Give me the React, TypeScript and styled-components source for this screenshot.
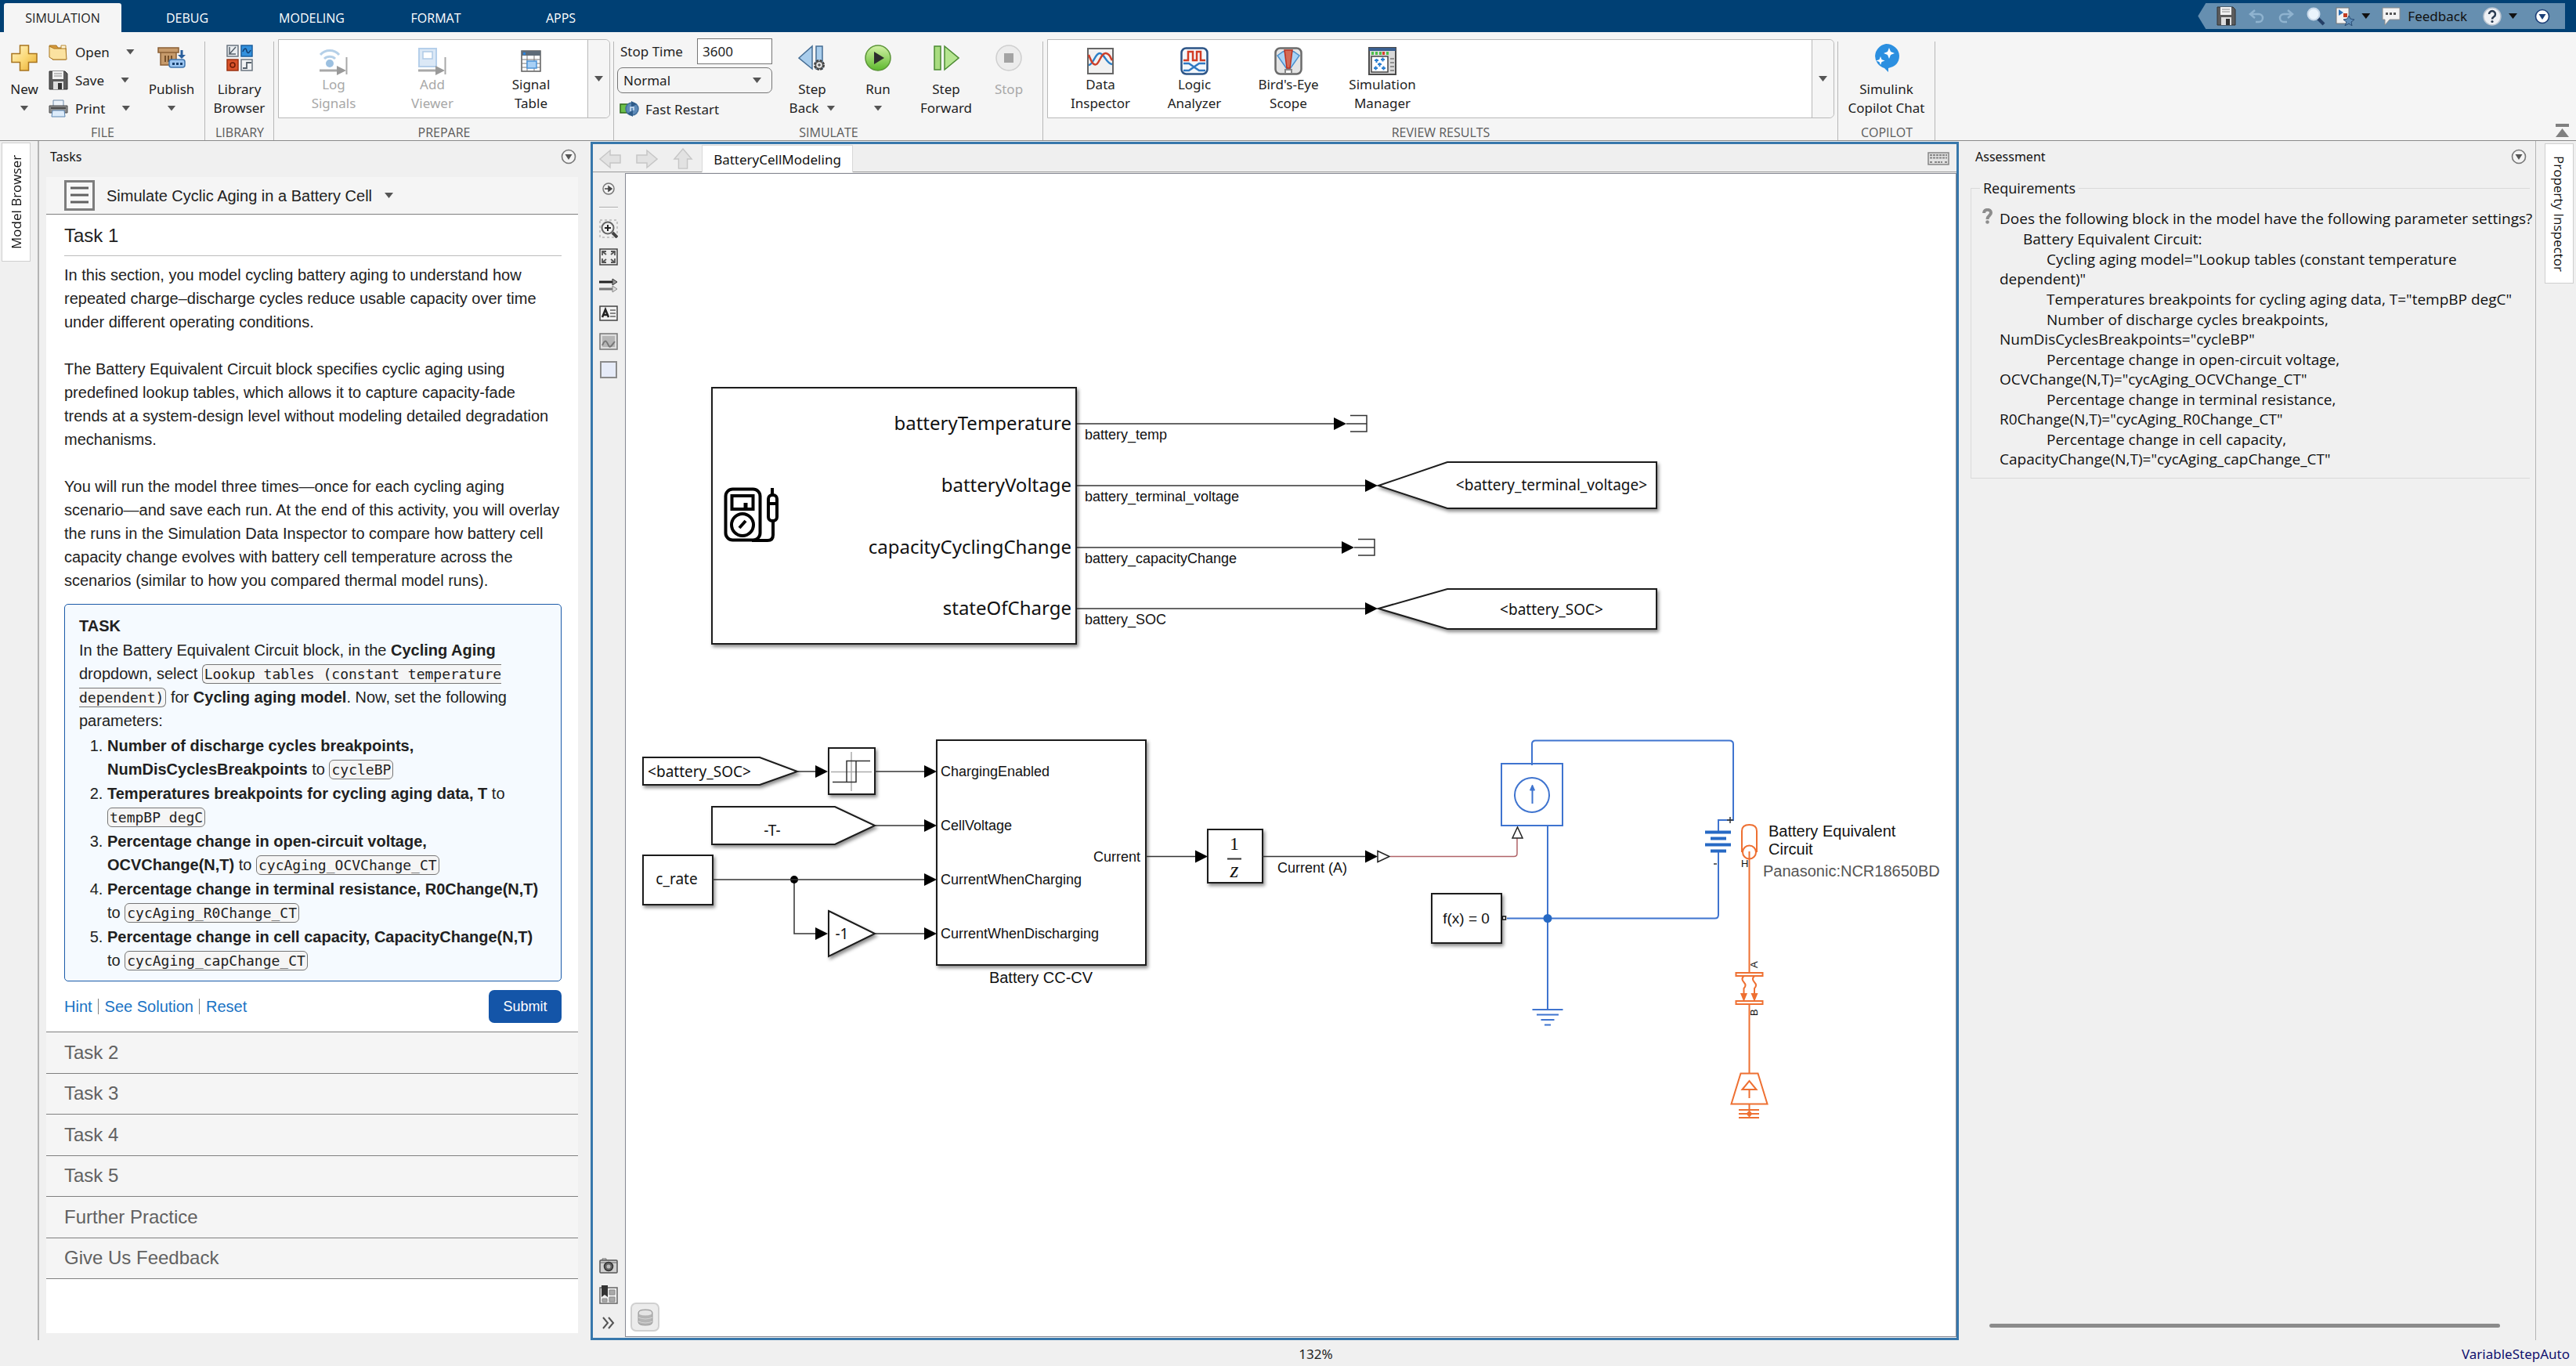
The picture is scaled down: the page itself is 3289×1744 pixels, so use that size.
import React from "react";
import styled, { createGlobalStyle, css } from "styled-components";

const UI = `"Noto Sans", "Open Sans", sans-serif`;
const CAPS = `"Open Sans", "Noto Sans", sans-serif`;
const DOC = `"Liberation Sans", Arial, sans-serif`;
const MONO = `"DejaVu Sans Mono", monospace`;

const GlobalStyle = createGlobalStyle`
  * { box-sizing: border-box; }
  body { margin: 0; background: #f0f0f0; font-family: ${UI}; font-size: 17px; color: #1e1e1e; }
  button, input, select { font: inherit; color: inherit; }
  button { border: 0; padding: 0; background: none; cursor: pointer; }
  svg { display: block; flex: none; }
`;

/* ---------- shell ---------- */

const Shell = styled.div`
  display: flex;
  flex-direction: column;
  min-height: 100vh;
`;

const Workspace = styled.main`
  display: flex;
  flex: 1;
  border-top: 1px solid #8a8a8a;
`;

const Caret = styled.span<{ $color?: string }>`
  flex: none;
  width: 11px;
  height: 7px;
  background: ${(p) => p.$color || "#555"};
  clip-path: polygon(0 0, 100% 0, 50% 100%);
`;

/* ---------- title bar ---------- */

const TitleBar = styled.header`
  display: flex;
  justify-content: space-between;
  height: 41px;
  padding: 4px 14px 0 5px;
  background: #004074;
`;

const TabList = styled.nav`
  display: flex;
`;

const Tab = styled.button<{ $width: number; $active?: boolean }>`
  width: ${(p) => p.$width}px;
  font-family: ${CAPS};
  font-size: 16px;
  color: ${(p) => (p.$active ? "#222" : "#fff")};
  background: ${(p) => (p.$active ? "#f5f5f5" : "transparent")};
  border-radius: 3px 3px 0 0;
`;

const QuickAccess = styled.div`
  display: flex;
  align-items: center;
  height: 33px;
  padding: 0 19px 0 24px;
  background: #668fb0;
  clip-path: polygon(10px 0, 100% 0, 100% 100%, 10px 100%, 0 50%);
  color: #111;
`;

const QuickButton = styled.button<{ $gap?: number }>`
  display: flex;
  align-items: center;
  gap: 9px;
  margin-right: ${(p) => p.$gap ?? 16}px;
`;

/* ---------- ribbon ---------- */

const Ribbon = styled.section`
  display: flex;
  height: 138px;
  background: #f5f5f5;
`;

const RibbonFill = styled.div`
  flex: 1;
  display: flex;
  align-items: flex-end;
  justify-content: flex-end;
  padding: 0 9px 4px 0;
`;

const Section = styled.div<{ $width: number }>`
  display: flex;
  flex-direction: column;
  justify-content: space-between;
  width: ${(p) => p.$width}px;
  background: linear-gradient(#b8b8b8, #b8b8b8) right 12px / 1px 100% no-repeat;
`;

const SectionBody = styled.div`
  display: flex;
`;

const SectionLabel = styled.div`
  font-family: ${CAPS};
  font-size: 16px;
  line-height: 20px;
  text-align: center;
  color: #5a5a5a;
`;

const BigButton = styled.button<{ $width: number }>`
  display: flex;
  flex-direction: column;
  align-items: center;
  width: ${(p) => p.$width}px;
  padding-top: 15px;
  line-height: 24px;
  &:disabled { color: #a8a8a8; }
`;

const BigIcon = styled.span`
  display: flex;
  align-items: center;
  justify-content: center;
  height: 36px;
  margin-bottom: 10px;
`;

const Line = styled.span`
  display: flex;
  align-items: center;
  justify-content: center;
  gap: 10px;
  height: 24px;
  white-space: nowrap;
`;

const FileColumn = styled.div`
  display: flex;
  flex-direction: column;
  width: 126px;
  padding-top: 7px;
`;

const SmallButton = styled.button`
  display: flex;
  align-items: center;
  gap: 9px;
  height: 36px;
`;

const SmallText = styled.span`
  margin-right: 12px;
`;

const Gallery = styled.div`
  display: flex;
  flex: 1;
  height: 101px;
  margin: 9px 5px 0;
  border: 1px solid #b9b9b9;
  border-radius: 0 6px 6px 0;
  background: #fff;
`;

const GalleryItems = styled.div`
  display: flex;
  flex: 1;
  padding-left: 7px;
  ${BigButton} { padding-top: 9px; }
  ${BigIcon} { margin-bottom: 0; }
`;

const GalleryMore = styled.button`
  display: flex;
  align-items: center;
  justify-content: center;
  width: 28px;
  border-left: 1px solid #b9b9b9;
  border-radius: 0 6px 6px 0;
  background: #f5f5f5;
`;

const RunSettings = styled.div`
  display: flex;
  flex-direction: column;
  gap: 4px;
  width: 198px;
  margin: 8px 9px 0 4px;
`;

const StopTimeRow = styled.div`
  display: flex;
  align-items: center;
  justify-content: space-between;
  padding-left: 4px;
`;

const TimeInput = styled.input`
  width: 96px;
  height: 33px;
  padding: 0 6px;
  border: 1px solid #767676;
  background: #fff;
`;

const ModeBox = styled.div`
  display: flex;
  align-items: center;
  position: relative;
  ${Caret} { position: absolute; right: 14px; pointer-events: none; }
`;

const ModeSelect = styled.select`
  appearance: none;
  width: 100%;
  height: 33px;
  padding: 0 7px;
  border: 1px solid #767676;
  border-radius: 7px;
  background: #f5f5f5;
`;

const FastRestart = styled.button`
  display: flex;
  align-items: center;
  gap: 7px;
  height: 32px;
  padding-left: 3px;
`;

/* ---------- side rails & panels ---------- */

const Rail = styled.aside<{ $side: "left" | "right" }>`
  width: 50px;
  padding: 2px;
  border: 0 solid #b4b4b4;
  ${(p) =>
    p.$side === "left"
      ? css`border-right-width: 2px;`
      : css`border-left-width: 1px; width: 52px; padding: 3px 3px 3px 11px;`}
`;

const RailTab = styled.button<{ $flip?: boolean; $height: number }>`
  width: 37px;
  height: ${(p) => p.$height}px;
  border: 1px solid #cfcfcf;
  background: #fff;
  writing-mode: vertical-rl;
  color: #111;
  font-family: ${CAPS};
  ${(p) => p.$flip && css`transform: rotate(180deg);`}
`;

const PanelHead = styled.div`
  display: flex;
  align-items: center;
  justify-content: space-between;
  height: 40px;
  margin-bottom: 6px;
  font-size: 16px;
  color: #111;
`;

const TasksPanel = styled.section`
  display: flex;
  flex-direction: column;
  width: 704px;
  padding: 0 16px 9px 9px;
  ${PanelHead} { padding: 0 2px 0 5px; }
`;

const TasksBody = styled.div`
  flex: 1;
  background: #fff;
  font-family: ${DOC};
  font-size: 20px;
  line-height: 30px;
  color: #212121;
`;

const CourseBar = styled.div`
  display: flex;
  align-items: center;
  gap: 15px;
  height: 48px;
  padding-left: 23px;
  background: #f5f5f5;
  border-bottom: 1px solid #808080;
  font-size: 20px;
`;

const CourseButton = styled.button`
  display: flex;
  align-items: center;
  gap: 16px;
`;

const Article = styled.article`
  padding: 0 21px 11px 23px;
`;

const TaskTitle = styled.h2`
  margin: 0 0 9px;
  height: 53px;
  border-bottom: 1px solid #bdbdbd;
  font-size: 24px;
  line-height: 54px;
  font-weight: 400;
`;

const Para = styled.p`
  margin: 0 0 30px;
  &:last-of-type { margin-bottom: 15px; }
`;

const TaskBox = styled.section`
  padding: 12px 18px 10px 18px;
  border: 1px solid #1a5aa8;
  border-radius: 5px;
  background: #f5faff;
`;

const BoxTitle = styled.h3`
  margin: 0;
  font-size: 20px;
  line-height: 31px;
`;

const BoxText = styled.div`
  line-height: 30px;
`;

const Steps = styled.ol`
  margin: 2px 0 0;
  padding-left: 36px;
`;

const Step = styled.li`
  padding-bottom: 1px;
`;

const Code = styled.code`
  padding: 1px 2px;
  border: 1px solid #767676;
  border-radius: 6px;
  background: #f5f5f5;
  font-family: ${MONO};
  font-size: 18px;
  line-height: 20px;
`;

const Actions = styled.div`
  display: flex;
  align-items: center;
  height: 42px;
  margin-top: 11px;
`;

const ActionLink = styled.a`
  line-height: 20px;
  color: #1a73c4;
  text-decoration: none;
  & + & { margin-left: 7px; padding-left: 8px; border-left: 1px solid #808080; }
`;

const Submit = styled.button`
  width: 93px;
  height: 42px;
  margin-left: auto;
  border-radius: 7px;
  background: #1455a8;
  color: #fff;
  font-size: 18px;
`;

const TaskList = styled.div`
  display: flex;
  flex-direction: column;
  height: 316px;
  border-top: 1px solid #808080;
`;

const TaskRow = styled.button`
  flex: 1;
  padding-left: 23px;
  border-bottom: 1px solid #808080;
  background: #f5f5f5;
  font-size: 24px;
  text-align: left;
  color: #616161;
`;

/* ---------- model window ---------- */

const Frame = styled.section`
  display: flex;
  flex-direction: column;
  flex: 1;
  min-width: 0;
  margin-top: 1px;
  padding-bottom: 1px;
  border: 3px solid #3777ab;
  background: #efefef;
`;

const NavBar = styled.div`
  display: flex;
  align-items: center;
  height: 36px;
  margin-bottom: 1px;
  padding: 1px 9px 0 8px;
  border-bottom: 1px solid #9a9a9a;
`;

const NavButtons = styled.div`
  display: flex;
  align-items: center;
  gap: 19px;
  width: 131px;
  padding-top: 2px;
`;

const ModelTab = styled.button`
  align-self: stretch;
  width: 193px;
  margin-bottom: -1px;
  border: 1px solid #d8d8d8;
  border-bottom: 0;
  background: #fff;
  color: #111;
`;

const NavSpacer = styled.div`
  flex: 1;
`;

const FrameBody = styled.div`
  display: flex;
  flex: 1;
`;

const Palette = styled.div`
  display: flex;
  flex-direction: column;
  align-items: center;
  width: 41px;
  padding: 2px 2px 0 0;
`;

const Tool = styled.button`
  display: flex;
  align-items: center;
  justify-content: center;
  width: 37px;
  height: 36px;
`;

const ToolRule = styled.hr`
  width: 24px;
  height: 2px;
  margin: 5px 0 8px;
  border: 0;
  background: linear-gradient(#a8a8a8 50%, #fff 50%);
`;

const Canvas = styled.div`
  position: relative;
  flex: 1;
  min-width: 0;
  overflow: hidden;
  border: 1px solid #858892;
  background: #fff;
`;

const CanvasButton = styled.button`
  position: absolute;
  left: 6px;
  bottom: 6px;
  display: flex;
  align-items: center;
  justify-content: center;
  width: 37px;
  height: 37px;
  border: 2px solid #d0d0d0;
  border-radius: 7px;
  background: #ececec;
`;

/* ---------- assessment ---------- */

const AssessPanel = styled.section`
  display: flex;
  flex-direction: column;
  width: 736px;
  padding: 0 7px 16px 15px;
  ${PanelHead} { padding: 0 4px 0 6px; }
`;

const Requirements = styled.fieldset`
  display: flex;
  gap: 9px;
  min-width: 0;
  margin: 0;
  padding: 12px 0 11px 14px;
  border: 1px solid #dadada;
  border-right: 0;
  font-family: ${CAPS};
  font-size: 19px;
  line-height: 25px;
  color: #111;
`;

const Legend = styled.legend`
  margin-left: -3px;
  padding: 0 4px;
  font-size: 18px;
  line-height: 28px;
`;

const ReqList = styled.div`
  display: grid;
  gap: 1px;
  padding-top: 1px;
`;

const Req = styled.div<{ $indent: number }>`
  text-indent: ${(p) => p.$indent * 30}px;
  white-space: pre;
`;

const ScrollThumb = styled.div`
  width: 652px;
  height: 5px;
  margin: auto 0 0 24px;
  border-radius: 3px;
  background: #8b8b8b;
`;

/* ---------- status bar ---------- */

const StatusBar = styled.footer`
  display: grid;
  grid-template-columns: 1fr auto 1fr;
  align-items: center;
  height: 33px;
  padding: 1px 8px 0 79px;
`;

const Solver = styled.a`
  justify-self: end;
  color: #10106e;
  text-decoration: none;
`;

/* ---------- icons ---------- */

const CircleCaret = ({ size = 20, ring = "#777", fill = "#f4f4f4", tri = "#555" }) => (
  <svg width={size} height={size} viewBox="0 0 20 20">
    <circle cx="10" cy="10" r="8.5" fill={fill} stroke={ring} strokeWidth="1.6" />
    <path d="M5.5 7h9L10 14z" fill={tri} />
  </svg>
);

const NewIcon = () => (
  <svg width="34" height="34" viewBox="0 0 34 34">
    <defs>
      <linearGradient id="gold" x1="0" y1="0" x2="1" y2="1">
        <stop offset="0" stopColor="#fff4c8" /><stop offset=".5" stopColor="#fbd978" /><stop offset="1" stopColor="#e6a92c" />
      </linearGradient>
    </defs>
    <path d="M11.5 1h11v10.500H33v11H22.500V33h-11V22.500H1v-11h10.500z" fill="url(#gold)" stroke="#a8741e" strokeWidth="1.500" />
  </svg>
);

const OpenIcon = () => (
  <svg width="25" height="21" viewBox="0 0 25 21">
    <path d="M1 2h9l2 3h10v15H5z" fill="#d79a3c" stroke="#a8741e" />
    <path d="M16 2h6v6h-6z" fill="#fff6d8" stroke="#b98a35" />
    <path d="M1 3l6 3h15l1 14H6L1 17z" fill="#fbe2a0" stroke="#a8741e" />
  </svg>
);

const SaveIcon = () => (
  <svg width="25" height="25" viewBox="0 0 25 25">
    <path d="M1 1h20l3 3v20H1z" fill="#5c5c5c" stroke="#333" />
    <path d="M5 1h14v10H5z" fill="#f2f2f2" />
    <path d="M7 4h10M7 7h10" stroke="#888" />
    <path d="M6 14h13v10H6z" fill="#ddd" />
    <path d="M12 16h5v8h-5z" fill="#333" />
  </svg>
);

const PrintIcon = () => (
  <svg width="25" height="23" viewBox="0 0 25 23">
    <path d="M6 1h13v8H6z" fill="#eef4fb" stroke="#6f8aa8" />
    <path d="M1 8h23v9H1z" fill="#8d8d8d" stroke="#4a4a4a" />
    <path d="M3 10h19v2H3z" fill="#4a4a4a" />
    <path d="M5 14h15l1 8H4z" fill="#dcebfa" stroke="#5d86b3" />
  </svg>
);

const PublishIcon = () => (
  <svg width="36" height="30" viewBox="0 0 36 30">
    <path d="M1 2h26v6H1zM4 8h20v16H4z" fill="#c69a6b" stroke="#8a5f34" strokeWidth="1.500" />
    <path d="M10 12v8M14 12v8M18 12v8" stroke="#6d4723" strokeWidth="1.800" />
    <path d="M31 5v7" stroke="#2a5f9c" strokeWidth="3" />
    <path d="M26 11h10l-5 5z" fill="#2a5f9c" />
    <rect x="15" y="17" width="20" height="10" rx="3" fill="#9cc5f0" stroke="#3e74ad" strokeWidth="1.500" />
    <path d="M19 21h3v3h-3zM24 21h3v3h-3zM29 21h3v3h-3z" fill="#173f6d" />
  </svg>
);

const LibraryIcon = () => (
  <svg width="34" height="34" viewBox="0 0 34 34">
    <rect x="1" y="1" width="14" height="14" fill="#e9edf0" stroke="#6b7680" strokeWidth="1.500" />
    <path d="M4 3v9M12 3L4 12h8" stroke="#55606a" fill="none" strokeWidth="1.500" />
    <rect x="19" y="1" width="14" height="14" fill="#3391dd" stroke="#1b5f9e" strokeWidth="1.500" />
    <path d="M21 9c2-5 4-5 5-1s3 3 5-1" stroke="#113f73" fill="none" strokeWidth="1.500" />
    <rect x="1" y="19" width="14" height="14" fill="#d9532a" stroke="#9b3210" strokeWidth="1.500" />
    <circle cx="8" cy="26" r="3" fill="none" stroke="#6b1b05" strokeWidth="1.500" />
    <rect x="19" y="19" width="14" height="14" fill="#f1f3f4" stroke="#6b7680" strokeWidth="1.500" />
    <path d="M21 30h5v-7h6" stroke="#55606a" fill="none" strokeWidth="1.800" />
  </svg>
);

const SinkArrow = () => (
  <>
    <path d="M0 30h26" stroke="#a8a8a8" strokeWidth="3" />
    <path d="M22 24l12 6-12 6z" fill="#9a9a9a" />
    <path d="M34.500 13v22" stroke="#a8a8a8" strokeWidth="2" />
  </>
);

const LogIcon = () => (
  <svg width="36" height="36" viewBox="0 0 36 36">
    <g fill="none" stroke="#b5d0e8" strokeWidth="3">
      <path d="M1 10a16 16 0 0 1 24 0" /><path d="M6 15a10 10 0 0 1 14 0" />
    </g>
    <circle cx="13" cy="21" r="5" fill="#9cc0e0" />
    <SinkArrow />
  </svg>
);

const ViewerIcon = () => (
  <svg width="36" height="36" viewBox="0 0 36 36">
    <rect x="1" y="2" width="22" height="23" fill="#dbe8f6" stroke="#b5cfea" strokeWidth="2" />
    <rect x="6" y="6" width="12" height="9" fill="#fff" stroke="#b0cae6" strokeWidth="1.500" />
    <SinkArrow />
  </svg>
);

const TableIcon = () => (
  <svg width="26" height="28" viewBox="0 0 26 28">
    <rect x="1" y="1" width="24" height="26" fill="#fff" stroke="#5b5b5b" strokeWidth="1.500" />
    <path d="M1 1h24v6H1z" fill="#5e6b78" />
    <path d="M1 12h24M1 17h24M1 22h24M8 7v20M17 7v20" stroke="#777" />
    <rect x="3" y="3" width="3" height="3" fill="#2e86de" />
    <rect x="8" y="14" width="12" height="9" fill="#a8d0f5" stroke="#4d94d8" strokeWidth="1.500" />
  </svg>
);

const FastIcon = () => (
  <svg width="26" height="20" viewBox="0 0 26 20">
    <rect x="1" y="4" width="9" height="11" fill="#6cc04a" stroke="#2f6b1c" strokeWidth="1.500" />
    <circle cx="16" cy="10" r="8" fill="#5d8ab8" stroke="#3e6c99" strokeWidth="1.500" />
    <path d="M15 0l7 4-7 4zM17 12l-7 4 7 4z" fill="#2f5c8a" />
    <path d="M14 13V8h4v4" stroke="#cfe2f5" strokeWidth="1.500" fill="none" />
  </svg>
);

const StepBackIcon = () => (
  <svg width="36" height="34" viewBox="0 0 36 34">
    <path d="M18 2v29L1 17z" fill="#a9cdec" stroke="#456d94" strokeWidth="1.500" />
    <rect x="23" y="2" width="8" height="29" fill="#a9cdec" stroke="#456d94" strokeWidth="1.500" />
    <circle cx="27" cy="26" r="5.500" fill="#eee" stroke="#3f3f3f" strokeWidth="3" strokeDasharray="3 1.300" />
    <circle cx="27" cy="26" r="4.500" fill="#e8e8e8" stroke="#4f4f4f" strokeWidth="1.500" />
    <circle cx="27" cy="26" r="1.800" fill="#555" />
  </svg>
);

const RunIcon = () => (
  <svg width="34" height="34" viewBox="0 0 34 34">
    <defs>
      <linearGradient id="runFill" x1="0" y1="0" x2="0" y2="1">
        <stop offset="0" stopColor="#d4f2a8" /><stop offset="1" stopColor="#5cb82c" />
      </linearGradient>
    </defs>
    <circle cx="17" cy="17" r="16" fill="url(#runFill)" stroke="#5b9437" strokeWidth="1.500" />
    <path d="M12 9v16l13-8z" fill="#2d2d2d" />
  </svg>
);

const StepForwardIcon = () => (
  <svg width="33" height="34" viewBox="0 0 33 34">
    <rect x="1" y="2" width="8" height="30" fill="#a9dc80" stroke="#4b8a32" strokeWidth="1.500" />
    <path d="M14 2v30l18-15z" fill="#b5e590" stroke="#4b8a32" strokeWidth="1.500" />
  </svg>
);

const StopIcon = () => (
  <svg width="34" height="34" viewBox="0 0 34 34">
    <circle cx="17" cy="17" r="16" fill="#ececec" stroke="#cfcfcf" strokeWidth="1.500" />
    <rect x="11" y="11" width="12" height="12" fill="#a3a3a3" />
  </svg>
);

const InspectorIcon = () => (
  <svg width="34" height="34" viewBox="0 0 34 34">
    <rect x="1" y="1" width="32" height="32" fill="#f1f1f1" stroke="#666" strokeWidth="2" />
    <path d="M2 22c6 0 8-15 14-15s8 13 16 14" fill="none" stroke="#2b7fc7" strokeWidth="2.500" />
    <path d="M2 9c4 10 6 14 10 12s6-15 12-14s5 5 8 9" fill="none" stroke="#cc3f2a" strokeWidth="2.500" />
  </svg>
);

const LogicIcon = () => (
  <svg width="36" height="36" viewBox="0 0 36 36">
    <rect x="1.500" y="1.500" width="33" height="33" rx="6" fill="#f4f7fb" stroke="#2c5486" strokeWidth="2.500" />
    <path d="M4 17h6V6h6v11h5V6h5v11h6" fill="none" stroke="#d23c24" strokeWidth="2.500" />
    <path d="M4 21h7l13 9h8M4 30h7l13-9h8" fill="none" stroke="#2f78c2" strokeWidth="2.500" />
  </svg>
);

const BirdIcon = () => (
  <svg width="36" height="36" viewBox="0 0 36 36">
    <rect x="1.500" y="1.500" width="33" height="33" rx="6" fill="#e4e4e4" stroke="#6b6b6b" strokeWidth="2.500" />
    <path d="M4 11l7-5 3-1h8l3 1 7 5-12 17h-4z" fill="#a8d3f6" stroke="#4c8fcb" strokeWidth="1.500" />
    <path d="M13 4h10l-3 23h-4z" fill="#d46a55" stroke="#bb2f1c" strokeWidth="1.500" />
    <path d="M14 33v-4h8v4" fill="#fff" stroke="#888" strokeWidth="2" />
  </svg>
);

const ManagerIcon = () => (
  <svg width="36" height="36" viewBox="0 0 36 36">
    <rect x="1" y="1" width="34" height="34" fill="#d9d9d9" stroke="#4a4a4a" strokeWidth="2" />
    <path d="M1 1h34v4H1z" fill="#3a5f8f" />
    <path d="M4 6h3v4H4zM9 6h3v4H9zM14 6h3v4h-3zM23 6h3v4h-3z" fill="#4cc04a" />
    <path d="M18 6h3v4h-3z" fill="#d8402a" />
    <rect x="4" y="12" width="21" height="20" fill="#fff" stroke="#444" strokeWidth="1.500" />
    <g stroke="#2a7fd0" strokeWidth="2"><path d="M8 17h5M10.500 15v5M16 16h5M18.500 13.500v5M12 22h5M14.500 20v5M7 27h5M9.500 24.500v5M17 27h5M19.500 24.500v5" /></g>
    <path d="M28 15h5M28 20h5M28 25h5M28 30h5" stroke="#777" strokeWidth="1.500" />
  </svg>
);

const CopilotIcon = () => (
  <svg width="36" height="36" viewBox="0 0 36 36">
    <path d="M17 0a17 16 0 0 1 17 15c0 9-5 14-14 16v5L15 31A17 16 0 0 1 17 0z" fill="#2b8fe0" />
    <path d="M21 5l2 5 5 2-5 2-2 5-2-5-5-2 5-2zM10 16l1.500 4 4 1.500-4 1.500-1.500 4-1.500-4-4-1.500 4-1.500z" fill="#fff" />
  </svg>
);

const UndoIcon = ({ flip }: { flip?: boolean }) => (
  <svg width="21" height="18" viewBox="0 0 21 18">
    <path d={flip ? "M13 1l6 5-6 5M18 6H8a5 5 0 0 0 0 10h4" : "M8 1L2 6l6 5M3 6h10a5 5 0 0 1 0 10H9"} fill="none" stroke="#8fb3cf" strokeWidth="2.500" />
  </svg>
);

const SearchIcon = () => (
  <svg width="24" height="24" viewBox="0 0 24 24">
    <path d="M14 14l8 8" stroke="#243f66" strokeWidth="4" />
    <circle cx="9" cy="9" r="7.500" fill="#eaf3fc" stroke="#c9d9ea" strokeWidth="2" />
  </svg>
);

const ShortcutIcon = () => (
  <svg width="24" height="24" viewBox="0 0 24 24">
    <rect x="1" y="1" width="16" height="20" fill="#f3f3f3" stroke="#777" />
    <path d="M4 3l6 4-6 4z" fill="#2b6fb5" />
    <rect x="10" y="8" width="5" height="5" fill="#c33c22" />
    <path d="M17 11l2 4 5 1-4 3 1 5-4-3-5 3 2-5-4-3 5-1z" fill="#5f8db8" stroke="#284c74" />
  </svg>
);

const ChatIcon = () => (
  <svg width="24" height="24" viewBox="0 0 24 24">
    <path d="M1 1h22v15H10l-6 7v-7H1z" fill="#f3f3f3" stroke="#8b8b8b" />
    <path d="M5 7h3v3H5zM10 7h3v3h-3zM15 7h3v3h-3z" fill="#555" />
  </svg>
);

const HelpIcon = () => (
  <svg width="24" height="24" viewBox="0 0 24 24">
    <circle cx="12" cy="12" r="11" fill="#eef1f5" stroke="#b9c4d0" strokeWidth="1.500" />
    <path d="M8 9a4 4 0 1 1 6 3.500c-1.500 1-2 1.500-2 3" fill="none" stroke="#27394f" strokeWidth="2.500" />
    <circle cx="12" cy="18.500" r="1.600" fill="#27394f" />
  </svg>
);

const CollapseIcon = () => (
  <svg width="17" height="17" viewBox="0 0 17 17">
    <path d="M0 0h17v4H0zM8.500 6L17 17H0z" fill="#808080" />
  </svg>
);

const MenuIcon = () => (
  <svg width="39" height="39" viewBox="0 0 39 39">
    <rect x="1.500" y="1.500" width="36" height="36" fill="#f7f7f7" stroke="#7d7d7d" strokeWidth="3" />
    <path d="M8 10h23M8 19h23M8 28h23" stroke="#616161" strokeWidth="3" />
  </svg>
);

const NavArrow = ({ dir }: { dir: "left" | "right" | "up" }) => (
  <svg width={dir === "up" ? 26 : 28} height="28" viewBox="0 0 28 28">
    <path
      d={{ left: "M1 14L14 3v6h13v10H14v6z", right: "M27 14L14 3v6H1v10h13v6z", up: "M14 0l12 14h-6v13H8V14H2z" }[dir]}
      fill="#e2e2e2"
      stroke="#c6c6c6"
      strokeWidth="1.500"
    />
  </svg>
);

const KeyboardIcon = () => (
  <svg width="28" height="17" viewBox="0 0 28 17">
    <rect x="1" y="1" width="26" height="15" fill="#e2e2e2" stroke="#858585" strokeWidth="1.500" />
    <path d="M3 4h22M3 7.500h22M3 13h3M9 13h10M22 13h3" stroke="#858585" strokeWidth="2" strokeDasharray="3 1" />
  </svg>
);

const QuestionIcon = () => (
  <svg width="13" height="20" viewBox="0 0 13 20">
    <path d="M2 6C2 .5 11 .5 11 5.500c0 4-4.500 3.500-4.500 8.500" fill="none" stroke="#8c8c8c" strokeWidth="4" />
    <circle cx="6.500" cy="17.500" r="2.300" fill="#8c8c8c" />
  </svg>
);

const tools: { name: string; art: React.ReactNode }[] = [
  { name: "Zoom", art: (<>
    <rect x="1" y="1" width="22" height="22" fill="none" stroke="#999" strokeDasharray="3 3" />
    <path d="M17 17l6 6" stroke="#444" strokeWidth="4" />
    <circle cx="11" cy="11" r="7.500" fill="#f2f2f2" stroke="#666" strokeWidth="2" />
    <path d="M7 11h8M11 7v8" stroke="#222" strokeWidth="2" /></>) },
  { name: "Fit to view", art: (<>
    <rect x="1" y="2" width="22" height="20" fill="#eee" stroke="#444" strokeWidth="1.500" />
    <path d="M4 10V5h5M15 5h5v5M20 14v5h-5M9 19H4v-5M4 5l5 4M20 5l-5 4M20 19l-5-4M4 19l5-4" fill="none" stroke="#555" strokeWidth="1.800" /></>) },
  { name: "Signals", art: (<>
    <path d="M0 8h17" stroke="#222" strokeWidth="3" /><path d="M17 4l6 4-6 4z" fill="#999" stroke="#333" />
    <path d="M0 17h17" stroke="#777" strokeWidth="3" /><path d="M17 13l6 4-6 4z" fill="#ddd" stroke="#888" /></>) },
  { name: "Annotation", art: (<>
    <rect x="1" y="3" width="22" height="18" fill="#f2f2f2" stroke="#444" strokeWidth="1.500" />
    <path d="M4 17l4-10 4 10M5 14h6" fill="none" stroke="#222" strokeWidth="2.500" />
    <path d="M14 8h7M14 12h7M14 16h7" stroke="#666" strokeWidth="1.500" /></>) },
  { name: "Image", art: (<>
    <rect x="1" y="2" width="22" height="20" fill="#ddd" stroke="#777" strokeWidth="1.500" />
    <rect x="4" y="5" width="16" height="14" fill="#b5b5b5" />
    <path d="M4 17c4-10 6-4 8 0s4 0 8-5" fill="none" stroke="#777" strokeWidth="2" /></>) },
  { name: "Area", art: <rect x="2" y="2" width="20" height="20" fill="#e6ebf8" stroke="#8b8b8b" strokeWidth="2" /> },
];

const bottomTools: { name: string; art: React.ReactNode }[] = [
  { name: "Screenshot", art: (<>
    <rect x="1" y="4" width="22" height="16" rx="1" fill="#d0d0d0" stroke="#555" strokeWidth="1.500" />
    <path d="M4 4V2h5v2M1 7h22" stroke="#666" fill="none" />
    <circle cx="12" cy="12" r="5.500" fill="#666" stroke="#333" strokeWidth="1.500" /><circle cx="12" cy="12" r="2.500" fill="#bbb" /></>) },
  { name: "Viewmarks", art: (<>
    <rect x="1" y="3" width="22" height="20" fill="#eee" stroke="#666" strokeWidth="1.500" />
    <path d="M13 6h7v6h-7zM13 15h7v6h-7zM4 17h6v4H4z" fill="#aaa" stroke="#888" />
    <path d="M3 0h8v15l-4-3-4 3z" fill="#333" /></>) },
  { name: "Hide palette", art: <path d="M5 5l6 7-6 7M12 5l6 7-6 7" fill="none" stroke="#555" strokeWidth="2" /> },
];

/* ---------- block diagram ---------- */

const Diagram = styled.svg`
  shape-rendering: auto;
`;

const blockStyle = css`
  fill: #fff;
  stroke: #1c1c1c;
  stroke-width: 2;
  filter: drop-shadow(2px 3px 2px rgba(0, 0, 0, 0.45));
`;
const Block = styled.rect`${blockStyle}`;
const Shape = styled.path`${blockStyle}`;

const Wire = styled.path<{ $color?: string; $w?: number }>`
  fill: none;
  stroke: ${(p) => p.$color || "#333"};
  stroke-width: ${(p) => p.$w || 1.5};
`;

const Label = styled.text<{ $font?: string; $size: number; $anchor?: string; $color?: string }>`
  font-family: ${(p) => p.$font || UI};
  font-size: ${(p) => p.$size}px;
  text-anchor: ${(p) => p.$anchor || "start"};
  fill: ${(p) => p.$color || "#111"};
`;

const Head = ({ x, y }: { x: number; y: number }) => (
  <path d={`M${x - 16} ${y - 8}L${x} ${y}L${x - 16} ${y + 8}z`} fill="#000" />
);

const BLUE = "#3f74cf";
const ORANGE = "#ee7032";

const outputs = [
  { port: "batteryTemperature", signal: "battery_temp", y: 541, end: 1719 },
  { port: "batteryVoltage", signal: "battery_terminal_voltage", y: 620, end: 1759 },
  { port: "capacityCyclingChange", signal: "battery_capacityChange", y: 699, end: 1729 },
  { port: "stateOfCharge", signal: "battery_SOC", y: 777, end: 1759 },
];

const inputs = [
  { port: "ChargingEnabled", y: 985, from: 1117 },
  { port: "CellVoltage", y: 1054, from: 1117 },
  { port: "CurrentWhenCharging", y: 1123, from: 910 },
  { port: "CurrentWhenDischarging", y: 1192, from: 1117 },
];

const ModelDiagram = () => (
  <Diagram width="1700" height="1484" viewBox="799 222 1700 1484" role="img" aria-label="Battery cell model">
    <Block x="909" y="495" width="465" height="327" />
    <g fill="none" stroke="#000" strokeWidth="4">
      <rect x="926.500" y="624.500" width="44" height="65" rx="9" />
      <rect x="934.500" y="633" width="27" height="17" strokeWidth="4" />
      <path d="M952 642v8" strokeWidth="5" />
      <circle cx="948" cy="670" r="14" />
      <path d="M944 674l8-9" strokeWidth="4" />
      <path d="M960 690h20q7 0 7-7v-17" />
      <rect x="981" y="632" width="11" height="33" rx="5" />
      <path d="M981 643h11M986 632v-9" />
    </g>
    {outputs.map((o) => (
      <g key={o.port}>
        <Label $size={24} $anchor="end" x="1368" y={o.y + 8}>{o.port}</Label>
        <Wire d={`M1375 ${o.y}H${o.end - 10}`} />
        <Head x={o.end} y={o.y} />
        <Label $font={DOC} $size={18} x="1385" y={o.y + 20}>{o.signal}</Label>
      </g>
    ))}
    <Wire d="M1719 541h26M1724 530.500h21v20.500h-21" />
    <Wire d="M1729 699h26M1734 688.500h21v20.500h-21" />
    <Shape d="M1760 620L1848 590H2115V649H1848z" />
    <Shape d="M1760 777L1848 752H2115V803H1848z" />
    <Label $size={19} $anchor="middle" x="1981" y="626">{"<battery_terminal_voltage>"}</Label>
    <Label $size={19} $anchor="middle" x="1981" y="785">{"<battery_SOC>"}</Label>

    <Shape d="M821 967H970L1018 985L970 1002H821z" />
    <Label $size={19} $anchor="middle" x="893" y="992">{"<battery_SOC>"}</Label>
    <Wire d="M1018 985H1045" />
    <Head x={1057} y={985} />
    <Block x="1058" y="955" width="59" height="59" />
    <Wire $color="#aaa" d="M1087 960v50M1061 985.500h52" />
    <Wire d="M1063 998.500h30v-27M1081 998.500v-27h30" />
    <Shape d="M909 1030H1066L1117 1054L1066 1078H909z" />
    <Label $size={19} $anchor="middle" x="986" y="1067">-T-</Label>
    <Block x="821" y="1092" width="89" height="63" />
    <Label $size={19} $anchor="middle" x="864" y="1129">c_rate</Label>
    <Wire d="M1014 1123V1192H1045" />
    <circle cx="1014" cy="1123" r="5" />
    <Head x={1057} y={1192} />
    <Shape d="M1058 1163L1117 1192L1058 1221z" />
    <Label $size={19} $anchor="middle" x="1075" y="1199">-1</Label>
    <Block x="1196" y="945" width="267" height="287" />
    {inputs.map((i) => (
      <g key={i.port}>
        <Wire d={`M${i.from} ${i.y}H1182`} />
        <Head x={1196} y={i.y} />
        <Label $font={DOC} $size={18} x="1201" y={i.y + 6}>{i.port}</Label>
      </g>
    ))}
    <Label $font={DOC} $size={18} $anchor="end" x="1456" y="1100">Current</Label>
    <Label $font={DOC} $size={20} $anchor="middle" x="1329" y="1255">Battery CC-CV</Label>

    <Wire d="M1463 1093.500H1530" />
    <Head x={1542} y={1093.5} />
    <Block x="1542" y="1059" width="70" height="68" />
    <Label $font={`"Liberation Serif", serif`} $size={24} $anchor="middle" x="1576" y="1085">1</Label>
    <Wire d="M1567 1096.500h18" $w={2} />
    <Label $font={`"Liberation Serif", serif`} $size={28} $anchor="middle" x="1576" y="1120" fontStyle="italic">z</Label>
    <Wire d="M1612 1093.500H1745" />
    <Head x={1759} y={1093.5} />
    <Label $font={DOC} $size={18} x="1631" y="1114">Current (A)</Label>
    <path d="M1759 1086.500l15 7-15 7z" fill="#fff" stroke="#222" strokeWidth="1.500" />
    <Wire $color="#b06468" d="M1775 1093.500H1933q4 0 4-4V1070" />
    <path d="M1931 1070l6.500-14 6.500 14z" fill="#fff" stroke="#222" strokeWidth="1.500" />

    <Block x="1828" y="1141" width="89" height="63" />
    <Label $font={DOC} $size={19} $anchor="middle" x="1872" y="1179">f(x) = 0</Label>
    <rect x="1918.500" y="1170" width="4" height="4" fill="#fff" stroke="#111" strokeWidth="1.500" />

    <Wire $color={BLUE} $w={2} d="M1917 975h78v79h-78z" />
    <Wire $color={BLUE} $w={2} d="M1934 1015a22 22 0 1 0 44 0a22 22 0 1 0 -44 0M1956.500 1026v-22" />
    <path d="M1953.500 1009l3-7 3 7z" fill={BLUE} stroke={BLUE} />
    <Wire $color={BLUE} $w={2} d="M1956 977V950q0-4.500 4.500-4.500H2208q5 0 5 4.500V1047H2194V1061" />
    <path d="M2177 1060.500h33v4h-33zM2184 1068.500h20v4h-20zM2177 1076.500h33v4h-33zM2184 1084.500h20v4h-20z" fill="#2669c4" />
    <Wire $color={BLUE} $w={2} d="M2194 1088V1168q0 4.500-4.500 4.500H1924" />
    <Wire d="M2205 1047h8M2209 1043v8" />
    <Wire d="M2188 1103h4" />
    <Wire $color={BLUE} $w={2} d="M1976 1053V1289M1956.500 1289h39M1962 1295.500h28M1967.500 1302h17M1972 1308.500h8" />
    <circle cx="1976" cy="1172.500" r="5.500" fill="#2669c4" />

    <g fill="none" stroke={ORANGE} strokeWidth="2">
      <path d="M2224 1088v-27q0-8 9.500-8t9.500 8v27" />
      <circle cx="2233.500" cy="1088" r="8.500" />
      <path d="M2233.500 1087V1242M2233.500 1282v88" />
      <rect x="2216.500" y="1242" width="34" height="4" />
      <rect x="2216.500" y="1278" width="34" height="4" />
      <path d="M2226.500 1246q-4 4 0 8t0 8v6M2240 1246q-4 4 0 8t0 8v6" />
      <path d="M2222.500 1370.500h22l12 39h-46zM2224.500 1391l9-11 9 11zM2233.500 1391v11M2233.500 1410v17M2220 1417h26M2220 1422h26M2220 1427h26" />
    </g>
    <path d="M2222 1268h9l-4.500 11zM2235.500 1268h9l-4.500 11z" fill={ORANGE} />
    <circle cx="2233.500" cy="1422" r="3" fill={ORANGE} />
    <Label $font={DOC} $size={13} x="2223" y="1107">H</Label>
    <Label $font={DOC} $size={13} transform="translate(2244 1236) rotate(-90)">A</Label>
    <Label $font={DOC} $size={13} transform="translate(2244 1297) rotate(-90)">B</Label>
    <Label $font={DOC} $size={20} x="2258" y="1068">Battery Equivalent</Label>
    <Label $font={DOC} $size={20} x="2258" y="1091">Circuit</Label>
    <Label $font={DOC} $size={20} $color="#555" x="2251" y="1119">Panasonic:NCR18650BD</Label>
  </Diagram>
);

/* ---------- composed parts ---------- */

type BigProps = { width: number; icon: React.ReactNode; lines: string[]; caret?: boolean; disabled?: boolean };

const Big = ({ width, icon, lines, caret, disabled }: BigProps) => (
  <BigButton $width={width} disabled={disabled}>
    <BigIcon>{icon}</BigIcon>
    {lines.map((l, i) => (
      <Line key={l}>{l}{caret && i === 1 && <Caret />}</Line>
    ))}
    {caret && lines.length === 1 && <Line><Caret /></Line>}
  </BigButton>
);

const fileActions = [
  { name: "Open", icon: <OpenIcon /> },
  { name: "Save", icon: <SaveIcon /> },
  { name: "Print", icon: <PrintIcon /> },
];

const steps = [
  { name: "Number of discharge cycles breakpoints, NumDisCyclesBreakpoints", value: "cycleBP" },
  { name: "Temperatures breakpoints for cycling aging data, T", value: "tempBP degC" },
  { name: "Percentage change in open-circuit voltage, OCVChange(N,T)", value: "cycAging_OCVChange_CT" },
  { name: "Percentage change in terminal resistance, R0Change(N,T)", value: "cycAging_R0Change_CT" },
  { name: "Percentage change in cell capacity, CapacityChange(N,T)", value: "cycAging_capChange_CT" },
];

const requirements: [number, string][] = [
  [0, "Does the following block in the model have the following parameter settings?"],
  [1, "Battery Equivalent Circuit:"],
  [2, 'Cycling aging model="Lookup tables (constant temperature\ndependent)"'],
  [2, 'Temperatures breakpoints for cycling aging data, T="tempBP degC"'],
  [2, 'Number of discharge cycles breakpoints,\nNumDisCyclesBreakpoints="cycleBP"'],
  [2, 'Percentage change in open-circuit voltage,\nOCVChange(N,T)="cycAging_OCVChange_CT"'],
  [2, 'Percentage change in terminal resistance,\nR0Change(N,T)="cycAging_R0Change_CT"'],
  [2, 'Percentage change in cell capacity,\nCapacityChange(N,T)="cycAging_capChange_CT"'],
];

export default function App() {
  return (
    <Shell>
      <GlobalStyle />
      <TitleBar>
        <TabList>
          <Tab $width={150} $active>SIMULATION</Tab>
          <Tab $width={168}>DEBUG</Tab>
          <Tab $width={150}>MODELING</Tab>
          <Tab $width={167}>FORMAT</Tab>
          <Tab $width={152}>APPS</Tab>
        </TabList>
        <QuickAccess>
          <QuickButton aria-label="Save"><SaveIcon /></QuickButton>
          <QuickButton aria-label="Undo"><UndoIcon /></QuickButton>
          <QuickButton aria-label="Redo"><UndoIcon flip /></QuickButton>
          <QuickButton aria-label="Search" $gap={13}><SearchIcon /></QuickButton>
          <QuickButton aria-label="Shortcuts" $gap={15}><ShortcutIcon /><Caret $color="#111" /></QuickButton>
          <QuickButton $gap={20}><ChatIcon />Feedback</QuickButton>
          <QuickButton aria-label="Help" $gap={22}><HelpIcon /><Caret $color="#111" /></QuickButton>
          <QuickButton aria-label="More" $gap={0}><CircleCaret ring="#1c3f78" fill="#fff" tri="#1c3f78" /></QuickButton>
        </QuickAccess>
      </TitleBar>

      <Ribbon>
        <Section $width={262}>
          <SectionBody>
            <Big width={62} icon={<NewIcon />} lines={["New"]} caret />
            <FileColumn>
              {fileActions.map((a) => (
                <SmallButton key={a.name}>{a.icon}<SmallText>{a.name}</SmallText><Caret /></SmallButton>
              ))}
            </FileColumn>
            <Big width={62} icon={<PublishIcon />} lines={["Publish"]} caret />
          </SectionBody>
          <SectionLabel>FILE</SectionLabel>
        </Section>
        <Section $width={88}>
          <SectionBody>
            <Big width={87} icon={<LibraryIcon />} lines={["Library", "Browser"]} />
          </SectionBody>
          <SectionLabel>LIBRARY</SectionLabel>
        </Section>
        <Section $width={434}>
          <SectionBody>
            <Gallery>
              <GalleryItems>
                <Big width={126} icon={<LogIcon />} lines={["Log", "Signals"]} disabled />
                <Big width={126} icon={<ViewerIcon />} lines={["Add", "Viewer"]} disabled />
                <Big width={126} icon={<TableIcon />} lines={["Signal", "Table"]} />
              </GalleryItems>
              <GalleryMore aria-label="More prepare tools"><Caret /></GalleryMore>
            </Gallery>
          </SectionBody>
          <SectionLabel>PREPARE</SectionLabel>
        </Section>
        <Section $width={548}>
          <SectionBody>
            <RunSettings>
              <StopTimeRow>
                <label htmlFor="stop-time">Stop Time</label>
                <TimeInput id="stop-time" defaultValue="3600" />
              </StopTimeRow>
              <ModeBox>
                <ModeSelect aria-label="Simulation mode" defaultValue="Normal"><option>Normal</option></ModeSelect>
                <Caret />
              </ModeBox>
              <FastRestart><FastIcon />Fast Restart</FastRestart>
            </RunSettings>
            <Big width={84} icon={<StepBackIcon />} lines={["Step", "Back"]} caret />
            <Big width={84} icon={<RunIcon />} lines={["Run"]} caret />
            <Big width={90} icon={<StepForwardIcon />} lines={["Step", "Forward"]} />
            <Big width={70} icon={<StopIcon />} lines={["Stop"]} disabled />
          </SectionBody>
          <SectionLabel>SIMULATE</SectionLabel>
        </Section>
        <Section $width={1015}>
          <SectionBody>
            <Gallery>
              <GalleryItems>
                <Big width={120} icon={<InspectorIcon />} lines={["Data", "Inspector"]} />
                <Big width={120} icon={<LogicIcon />} lines={["Logic", "Analyzer"]} />
                <Big width={120} icon={<BirdIcon />} lines={["Bird's-Eye", "Scope"]} />
                <Big width={120} icon={<ManagerIcon />} lines={["Simulation", "Manager"]} />
              </GalleryItems>
              <GalleryMore aria-label="More review tools"><Caret /></GalleryMore>
            </Gallery>
          </SectionBody>
          <SectionLabel>REVIEW RESULTS</SectionLabel>
        </Section>
        <Section $width={124}>
          <SectionBody>
            <Big width={123} icon={<CopilotIcon />} lines={["Simulink", "Copilot Chat"]} />
          </SectionBody>
          <SectionLabel>COPILOT</SectionLabel>
        </Section>
        <RibbonFill>
          <button aria-label="Collapse toolstrip"><CollapseIcon /></button>
        </RibbonFill>
      </Ribbon>

      <Workspace>
        <Rail $side="left">
          <RailTab $flip $height={152}>Model Browser</RailTab>
        </Rail>

        <TasksPanel>
          <PanelHead>Tasks<button aria-label="Tasks panel menu"><CircleCaret /></button></PanelHead>
          <TasksBody>
            <CourseBar>
              <button aria-label="Contents"><MenuIcon /></button>
              <CourseButton>Simulate Cyclic Aging in a Battery Cell<Caret /></CourseButton>
            </CourseBar>
            <Article>
              <TaskTitle>Task 1</TaskTitle>
              <Para>
                In this section, you model cycling battery aging to understand how repeated charge–discharge
                cycles reduce usable capacity over time under different operating conditions.
              </Para>
              <Para>
                The Battery Equivalent Circuit block specifies cyclic aging using predefined lookup tables,
                which allows it to capture capacity-fade trends at a system-design level without modeling
                detailed degradation mechanisms.
              </Para>
              <Para>
                You will run the model three times—once for each cycling aging scenario—and save each run. At
                the end of this activity, you will overlay the runs in the Simulation Data Inspector to compare
                how battery cell capacity change evolves with battery cell temperature across the scenarios
                (similar to how you compared thermal model runs).
              </Para>
              <TaskBox>
                <BoxTitle>TASK</BoxTitle>
                <BoxText>
                  In the Battery Equivalent Circuit block, in the <b>Cycling Aging</b> dropdown, select{" "}
                  <Code>Lookup tables (constant temperature dependent)</Code> for <b>Cycling aging model</b>.
                  Now, set the following parameters:
                </BoxText>
                <Steps>
                  {steps.map((s) => (
                    <Step key={s.value}><b>{s.name}</b> to <Code>{s.value}</Code></Step>
                  ))}
                </Steps>
              </TaskBox>
              <Actions>
                <ActionLink href="#hint">Hint</ActionLink>
                <ActionLink href="#solution">See Solution</ActionLink>
                <ActionLink href="#reset">Reset</ActionLink>
                <Submit>Submit</Submit>
              </Actions>
            </Article>
            <TaskList>
              {["Task 2", "Task 3", "Task 4", "Task 5", "Further Practice", "Give Us Feedback"].map((t) => (
                <TaskRow key={t}>{t}</TaskRow>
              ))}
            </TaskList>
          </TasksBody>
        </TasksPanel>

        <Frame>
          <NavBar>
            <NavButtons>
              <button aria-label="Back"><NavArrow dir="left" /></button>
              <button aria-label="Forward"><NavArrow dir="right" /></button>
              <button aria-label="Up"><NavArrow dir="up" /></button>
            </NavButtons>
            <ModelTab>BatteryCellModeling</ModelTab>
            <NavSpacer />
            <KeyboardIcon />
          </NavBar>
          <FrameBody>
            <Palette>
              <Tool aria-label="Hide or show browser">
                <svg width="18" height="18" viewBox="0 0 18 18">
                  <circle cx="9" cy="9" r="7" fill="#f2f2f2" stroke="#777" strokeWidth="1.500" />
                  <path d="M4 9h6M9 6l4 3-4 3z" fill="#444" stroke="#444" strokeWidth="1.500" />
                </svg>
              </Tool>
              <ToolRule />
              {tools.map((t) => (
                <Tool key={t.name} aria-label={t.name}>
                  <svg width="24" height="24" viewBox="0 0 24 24">{t.art}</svg>
                </Tool>
              ))}
              <NavSpacer />
              {bottomTools.map((t) => (
                <Tool key={t.name} aria-label={t.name}>
                  <svg width="24" height="24" viewBox="0 0 24 24">{t.art}</svg>
                </Tool>
              ))}
            </Palette>
            <Canvas>
              <ModelDiagram />
              <CanvasButton aria-label="Model data">
                <svg width="22" height="24" viewBox="0 0 22 24">
                  <path d="M2 6q0-4 9-4t9 4v12q0 4-9 4t-9-4z" fill="#b4b4b4" stroke="#9a9a9a" />
                  <path d="M3 6q0-3 8-3t8 3v2q-8 3-16 0z" fill="#e4e4e4" />
                  <path d="M2 12q9 4 18 0M2 17q9 4 18 0" fill="none" stroke="#d6d6d6" />
                </svg>
              </CanvasButton>
            </Canvas>
          </FrameBody>
        </Frame>

        <AssessPanel>
          <PanelHead>Assessment<button aria-label="Assessment panel menu"><CircleCaret /></button></PanelHead>
          <Requirements>
            <Legend>Requirements</Legend>
            <QuestionIcon />
            <ReqList>
              {requirements.map(([indent, text]) => (
                <Req key={text} $indent={indent}>{text}</Req>
              ))}
            </ReqList>
          </Requirements>
          <ScrollThumb />
        </AssessPanel>

        <Rail $side="right">
          <RailTab $height={179}>Property Inspector</RailTab>
        </Rail>
      </Workspace>

      <StatusBar>
        <span />
        <span>132%</span>
        <Solver href="#solver">VariableStepAuto</Solver>
      </StatusBar>
    </Shell>
  );
}
